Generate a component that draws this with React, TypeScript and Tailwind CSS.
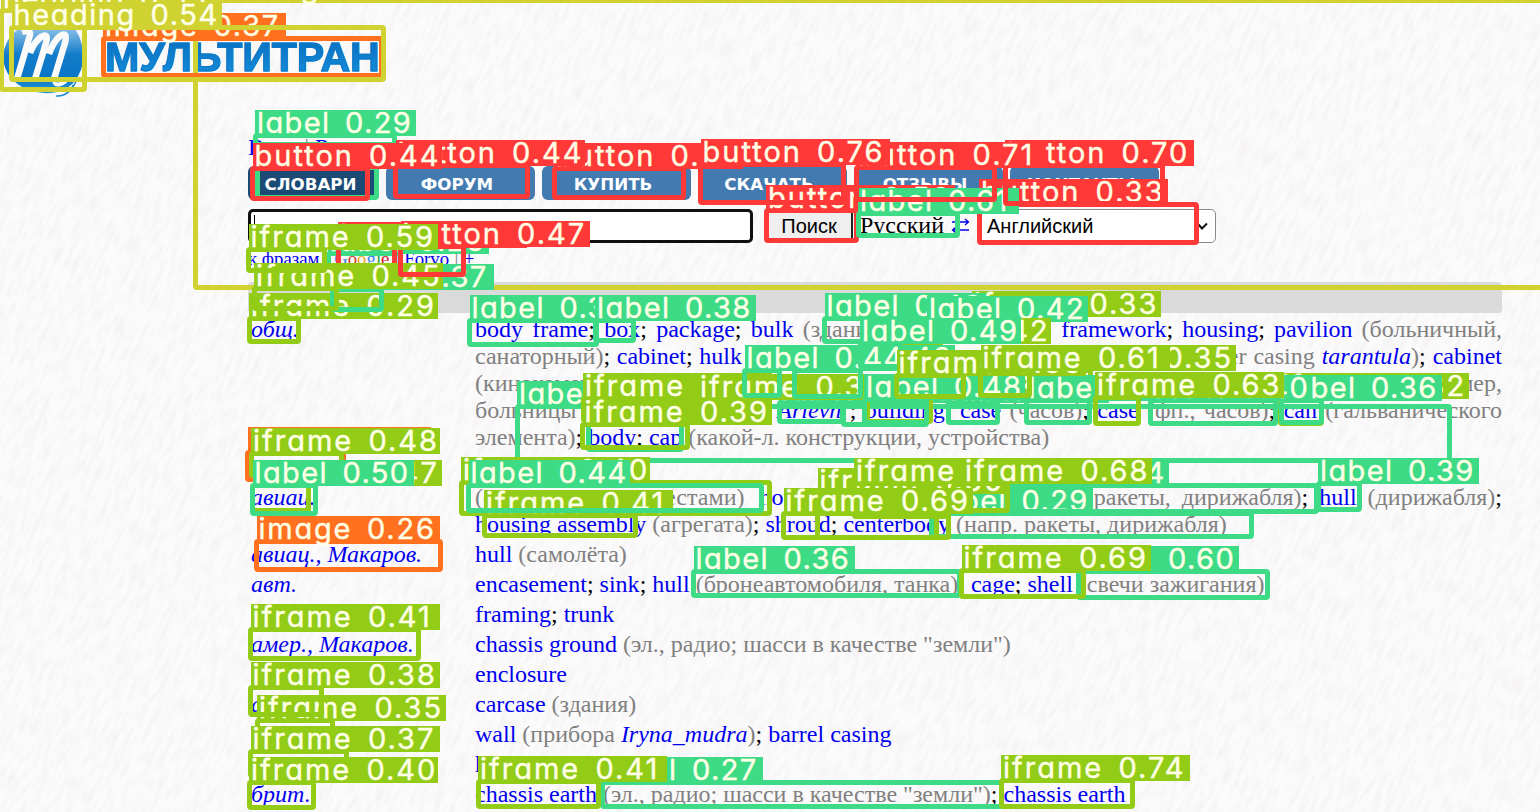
import React from "react";

type Kind = "heading" | "image" | "label" | "button" | "iframe";
type Detection = [Kind, number, number, number, number, number];

const detections: Detection[] = [
  ["heading", 0.25, 195.5, 0.5, 1542, 287.5],
  ["heading", 0.53, 1, 10, 84.5, 89.5],
  ["heading", 0.54, 11.5, 27.5, 383.5, 79.5],
  ["image", 0.37, 103, 38.5, 381, 75],
  ["label", 0.29, 255, 135, 394, 155],
  ["label", 0.28, 257, 167, 376.5, 197.5],
  ["button", 0.445, 252.5, 168, 367.5, 198.5],
  ["button", 0.44, 395.5, 165, 527.5, 196],
  ["button", 0.38, 554, 168, 683, 197.5],
  ["button", 0.76, 700.5, 164, 843.5, 202.5],
  ["button", 0.71, 856, 167, 994, 199],
  ["button", 0.7, 1005, 165, 1162.5, 203.5],
  ["button", 0.5, 766, 210, 856, 240.5],
  ["label", 0.61, 858, 213, 957.5, 235],
  ["button", 0.33, 979, 204.5, 1196.5, 242.5],
  ["iframe", 0.59, 248.5, 249.5, 324, 270],
  ["label", 0.26, 328, 253, 400, 268],
  ["button", 0.32, 338, 247, 394, 268],
  ["button", 0.47, 400.5, 246, 463, 274],
  ["iframe", 0.45, 254, 288, 336, 308],
  ["label", 0.37, 332.5, 289, 381.5, 309],
  ["iframe", 0.29, 249, 318, 298.5, 341],
  ["label", 0.35, 469.5, 320, 596.5, 344],
  ["label", 0.38, 595, 320, 633.5, 340],
  ["label", 0.4, 824.5, 318, 900, 341],
  ["label", 0.42, 927, 321, 1000, 341],
  ["iframe", 0.33, 972, 316, 1040, 341],
  ["label", 0.49, 860, 343, 900, 366],
  ["iframe", 0.42, 862, 343, 940, 368],
  ["label", 0.44, 744.5, 370, 779.5, 395.5],
  ["label", 0.43, 794, 370, 860, 396],
  ["iframe", 0.56, 896.5, 375, 963, 396.5],
  ["iframe", 0.61, 980.5, 370, 1029, 395],
  ["iframe", 0.35, 1047, 370, 1090, 395],
  ["iframe", 0.34, 583, 398, 660, 420],
  ["iframe", 0.36, 698, 399, 760, 420],
  ["label", 0.48, 864, 399, 926, 422],
  ["label", 0.45, 1026.5, 400, 1089.5, 422.5],
  ["iframe", 0.63, 1095, 397, 1138.5, 423.5],
  ["label", 0.4, 1150.5, 400, 1275.5, 423.5],
  ["label", 0.36, 1281, 400, 1321, 422.5],
  ["iframe", 0.32, 1280, 398, 1321.5, 423.5],
  ["iframe", 0.39, 582.5, 424, 687.5, 447.5],
  ["label", 0.3, 588, 424, 681, 449],
  ["label", 0.33, 517, 406.5, 1449.5, 460],
  ["label", 0.3, 779, 402, 842, 421],
  ["label", 0.27, 843.5, 402, 926, 424],
  ["iframe", 0.37, 867.5, 399, 930, 421],
  ["label", 0.31, 948, 402, 997.5, 422.5],
  ["image", 0.25, 247.5, 452, 343.5, 479],
  ["iframe", 0.48, 251, 453, 341, 475],
  ["label", 0.5, 252.5, 485, 315.5, 513],
  ["iframe", 0.47, 252.5, 485, 308.5, 510],
  ["image", 0.26, 256.5, 541, 440.5, 569],
  ["iframe", 0.4, 461, 482.5, 769.5, 513.5],
  ["label", 0.44, 468.5, 485, 761.5, 510],
  ["iframe", 0.41, 484, 515, 635, 535.5],
  ["iframe", 0.69, 783.5, 513.5, 948, 537.5],
  ["iframe", 0.5, 817.5, 493, 936, 537],
  ["iframe", 0.66, 854, 483, 945, 516],
  ["iframe", 0.68, 963, 483, 1007.5, 510],
  ["label", 0.64, 1008, 485.5, 1316, 511.5],
  ["label", 0.29, 931.5, 513, 1251.5, 536.5],
  ["label", 0.39, 1318, 483.5, 1359.5, 509.5],
  ["label", 0.36, 693.5, 571.5, 959, 595.5],
  ["iframe", 0.69, 961.5, 570.5, 1083.5, 596],
  ["label", 0.6, 1078, 571, 1267.5, 597],
  ["iframe", 0.41, 250.5, 629, 418.5, 658.5],
  ["iframe", 0.38, 250.5, 687, 321.5, 714],
  ["iframe", 0.35, 257, 720, 332.5, 743],
  ["iframe", 0.37, 250.5, 751, 346, 775],
  ["iframe", 0.4, 249, 782, 313.5, 807.5],
  ["iframe", 0.41, 478, 781, 598.5, 806],
  ["label", 0.27, 602, 782.5, 1001, 806.5],
  ["iframe", 0.74, 1001, 780, 1132.5, 806],
];

const tone: Record<Kind, { border: string; fill: string }> = {
  heading: { border: "border-[#cfd231]", fill: "bg-[#cfd231] w-[210px] tracking-[1.55px]" },
  image: { border: "border-[#ff701f]", fill: "bg-[#ff701f] w-[183px] tracking-[1.75px]" },
  label: { border: "border-[#3ddb86]", fill: "bg-[#3ddb86] w-[161px] tracking-[1.4px]" },
  button: { border: "border-[#ff3838]", fill: "bg-[#ff3838] w-[189px] tracking-[2px]" },
  iframe: { border: "border-[#92cc17]", fill: "bg-[#92cc17] w-[189px] tracking-[2px]" },
};

function Detections() {
  const ordered = [...detections].sort((a, b) => a[1] - b[1]);
  return (
    <div className="pointer-events-none absolute inset-0 overflow-hidden">
      {ordered.map(([kind, score, x1, y1, x2, y2], i) => (
        <React.Fragment key={i}>
          <div
            className={`absolute rounded-[4px] border-[5px] ${tone[kind].border}`}
            style={{ left: x1 - 2.5, top: y1 - 2.5, width: x2 - x1 + 5, height: y2 - y1 + 5 }}
          />
          <div
            className={`absolute h-[26px] pl-[2px] font-['Inter',sans-serif] text-[29px] leading-[26px] [word-spacing:5px] whitespace-nowrap text-[#ffffe6] [font-feature-settings:'cv11'] [-webkit-text-stroke:0.4px_#ffffe6] ${tone[kind].fill}`}
            style={{ left: x1, top: y1 - 25.5 }}
          >
            {kind} {(Math.floor(score * 100 + 0.001) / 100).toFixed(2)}
          </div>
        </React.Fragment>
      ))}
    </div>
  );
}

function Paper() {
  return (
    <svg className="absolute inset-0 h-full w-full" aria-hidden="true">
      <filter id="grain" x="0" y="0" width="100%" height="100%">
        <feTurbulence type="fractalNoise" baseFrequency="0.2 0.05" numOctaves="3" seed="4" />
        <feColorMatrix values="0 0 0 0 0.6  0 0 0 0 0.54  0 0 0 0 0.54  0.36 0 0 0 -0.14" />
      </filter>
      <rect width="1540" height="812" fill="#fcfbfb" />
      <g transform="rotate(24)">
        <rect x="-100" y="-800" width="2000" height="1800" filter="url(#grain)" />
      </g>
    </svg>
  );
}

function Logo() {
  return (
    <div className="flex h-[100px] items-start pt-[27px] pl-[3px]">
      <svg width="82" height="72" viewBox="3 27 82 72">
        <defs>
          <linearGradient id="globe" x1="0" y1="0" x2="0" y2="1">
            <stop offset="0" stopColor="#8dbfe6" />
            <stop offset="0.4" stopColor="#147dcb" />
            <stop offset="0.75" stopColor="#0875c5" />
            <stop offset="1" stopColor="#2695da" />
          </linearGradient>
        </defs>
        <path d="M20 28H74Q84 40 83 62Q80 80 66 89Q48 97 28 90Q5 80 3 58Q4 38 20 28Z" fill="url(#globe)" />
        <path
          d="M17 79L30 35Q31 29 22 32M35 79L46 43Q49 32 41 37Q34 42 30 53M54 79L65 43Q68 31 60 36Q53 42 49 54"
          fill="none"
          stroke="#fafafa"
          strokeWidth="6.5"
        />
        <path d="M54 79Q54 89 66 81" fill="none" stroke="#fafafa" strokeWidth="4" />
        <path d="M56 96Q70 97 77 79M65 94Q71 92 73 85" fill="none" stroke="#1689d2" strokeWidth="1.5" />
      </svg>
      <div className="ml-[20px] bg-linear-to-b from-[#0867b8] to-[#158fdd] bg-clip-text pt-[9px] font-['Liberation_Sans',sans-serif] text-[41px] leading-[43px] font-bold text-transparent [-webkit-text-stroke:1px_#0b79c9]">
        МУЛЬТИТРАН
      </div>
    </div>
  );
}

const A = ({ children }: { children: React.ReactNode }) => (
  <a href="#" className="text-[#0000ee]">{children}</a>
);
const G = ({ children }: { children: React.ReactNode }) => <span className="text-[#808080]">{children}</span>;

function Row({ topic, children }: { topic: string; children: React.ReactNode }) {
  return (
    <div className="flex pb-[3px] leading-[27px]">
      <div className="w-[224px] shrink-0 italic"><A>{topic}</A></div>
      <div className="w-[1027px] whitespace-nowrap">{children}</div>
    </div>
  );
}

const Line = ({ children }: { children: React.ReactNode }) => (
  <div className="flex h-[27px] justify-between">{children}</div>
);

function Nav() {
  const item = "flex h-[34px] items-center justify-center rounded-[6px] font-['DejaVu_Sans',sans-serif] text-[16.7px] font-bold text-white";
  return (
    <nav className="mt-[8px] flex gap-[7px]">
      <a className={`${item} w-[131px] bg-[#1b4a75] pt-[3px] pr-[6px]`}>СЛОВАРИ</a>
      {["ФОРУМ", "КУПИТЬ", "СКАЧАТЬ", "ОТЗЫВЫ", "КОНТАКТЫ"].map((t) => (
        <a key={t} className={`${item} w-[149px] bg-[#437bb1] pt-[3px] pr-[7px]`}>{t}</a>
      ))}
    </nav>
  );
}

export default function App() {
  return (
    <div className="relative h-[812px] w-[1540px] overflow-hidden font-['Liberation_Serif',serif] text-[24px] text-black">
      <Paper />
      <div className="relative">
        <Logo />
        <main className="ml-[248px] w-[1254px] pt-[34px]">
          <div className="h-[24px] leading-[27px]"><A>Вход</A> <G>|</G> <A>Регистрация</A></div>
          <Nav />
          <div className="mt-[9px] flex h-[34px] items-center">
            <div className="flex h-[34px] w-[505px] items-center rounded-[5px] border-[3px] border-[#101010] bg-white pl-[3px]">
              <span className="h-[22px] w-px bg-black" />
            </div>
            <button className="ml-[12px] h-[32px] w-[88px] rounded-[3px] border-2 border-[#222] bg-[#efefef] font-['Liberation_Sans',sans-serif] text-[20px] leading-[28px]">Поиск</button>
            <span className="-mt-[2px] ml-[7px]">Русский</span>
            <a className="ml-[7px] flex w-[20px] items-center text-[#0000ee]">
              <svg width="19" height="16" viewBox="0 0 19 16" fill="none" stroke="currentColor" strokeWidth="1.3">
                <path d="M1 4H17M14 1L17.5 4L14 7M18 12H2M5 9L1.5 12L5 15" />
              </svg>
            </a>
            <div className="ml-[8px] flex h-[34px] w-[237px] items-center justify-between rounded-[5px] border border-[#8a8a8a] bg-white pr-[7px] pl-[7px] font-['Liberation_Sans',sans-serif] text-[20px]">
              Английский
              <svg width="11" height="9" viewBox="0 0 11 9" fill="none" stroke="#111" strokeWidth="2">
                <path d="M1 2L5 6.5L10 1.5" />
              </svg>
            </div>
          </div>
          <div className="mt-[5px] flex h-[22px] gap-[5.5px] text-[18.8px] leading-[22px]">
            <A>к фразам</A> <G>|</G>
            <span>
              <span className="text-[#3b82e8]">G</span><span className="text-[#d43c2f]">o</span>
              <span className="text-[#efab17]">o</span><span className="text-[#3b82e8]">g</span>
              <span className="text-[#2c9c48]">l</span><span className="text-[#d4152a]">e</span>
            </span>
            <G>|</G> <A>Forvo</A> <G>|</G> <A>+</A>
          </div>
          <div className="mt-[12px] h-[31px] rounded-[4px] bg-[#dadada]" />
          <div className="pt-[3px] pl-[3px]">
            <Row topic="общ.">
              <Line>
                <span className="[word-spacing:3.3px]"><A>body frame</A>; <A>box</A>; <A>package</A>; <A>bulk</A> <G>(здания)</G>; <A>body</A></span>
                <span className="[word-spacing:3px]"><A>framework</A>; <A>housing</A>; <A>pavilion</A> <G>(больничный,</G></span>
              </Line>
              <Line>
                <span className="[word-spacing:0.6px]"><G>санаторный)</G>; <A>cabinet</A>; <A>hulk</A>&nbsp; <A>frame</A></span>
                <span className="[word-spacing:1px]"><G>outer casing</G> <i><A>tarantula</A></i><G>)</G>; <A>cabinet</A></span>
              </Line>
              <Line>
                <G>(кинокамеры)</G>
                <G>например,</G>
              </Line>
              <Line>
                <span><G>больницы</G></span>
                <span className="[word-spacing:2.4px]"><i><A>Arlevn</A></i>&nbsp;; <A>building</A>; <A>case</A> <G>(часов)</G>; <A>case</A> <G>(фп., часов)</G>; <A>can</A> <G>(гальванического</G></span>
              </Line>
              <Line><span><G>элемента)</G>; <A>body</A>; <A>cap</A> <G>(какой-л. конструкции, устройства)</G></span></Line>
            </Row>
            <Row topic="ав."><A>case</A></Row>
            <Row topic="авиац.">
              <Line>
                <span className="[word-spacing:9px]"><G>(со спальными местами)</G> <A>housing</A></span>
                <span className="[word-spacing:5px]"><G>ракеты, дирижабля)</G>; <A>hull</A> <G>(дирижабля)</G>;</span>
              </Line>
              <Line><span><A>housing assembly</A> <G>(агрегата)</G>; <A>shroud</A>; <A>centerbody</A> <G>(напр. ракеты, дирижабля)</G></span></Line>
            </Row>
            <Row topic="авиац., Макаров."><A>hull</A> <G>(самолёта)</G></Row>
            <Row topic="авт."><A>encasement</A>; <A>sink</A>; <A>hull</A> <G>(бронеавтомобиля, танка)</G>; <A>cage</A>; <A>shell</A> <G>(свечи зажигания)</G></Row>
            <Row topic="амер."><A>framing</A>; <A>trunk</A></Row>
            <Row topic="амер., Макаров."><A>chassis ground</A> <G>(эл., радио; шасси в качестве "земли")</G></Row>
            <Row topic="анат."><A>enclosure</A></Row>
            <Row topic="архит."><A>carcase</A> <G>(здания)</G></Row>
            <Row topic="астр."><A>wall</A> <G>(прибора <i><A>Iryna_mudra</A></i>)</G>; <A>barrel casing</A></Row>
            <Row topic="аэр."><A>housing</A></Row>
            <Row topic="брит."><A>chassis earth</A> <G>(эл., радио; шасси в качестве "земли")</G>; <A>chassis earth</A></Row>
          </div>
        </main>
      </div>
      <Detections />
    </div>
  );
}
